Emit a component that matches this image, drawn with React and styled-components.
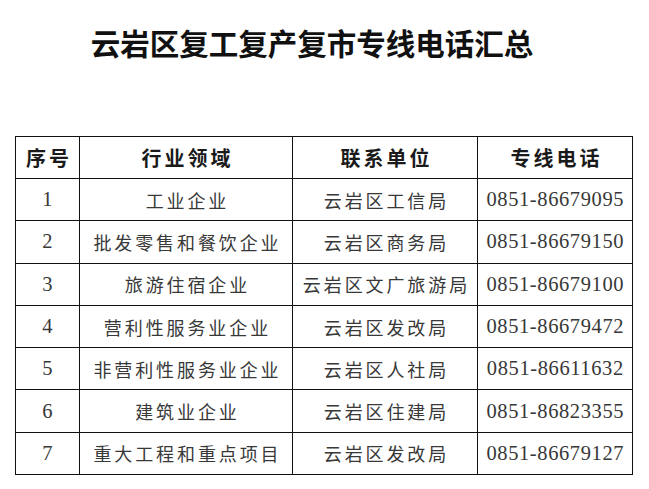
import React from "react";
import styled, { createGlobalStyle } from "styled-components";

const GlobalStyle = createGlobalStyle`
  html, body {
    margin: 0;
    padding: 0;
    background: #ffffff;
  }
`;

const Page = styled.main`
  width: 649px;
  height: 489px;
  background: #ffffff;
  font-family: "Noto Sans CJK SC", "Noto Sans", sans-serif;
  overflow: hidden;
`;

const Title = styled.h1`
  margin: 0;
  padding: 24px 25px 0 0;
  height: 112px;
  box-sizing: border-box;
  text-align: center;
  font-size: 29.5px;
  line-height: 36px;
  font-weight: 700;
  color: #111111;
  font-family: "Noto Sans CJK SC", sans-serif;
`;

const Table = styled.table`
  margin: 24px 0 0 15px;
  width: 617px;
  border-collapse: collapse;
  table-layout: fixed;
`;

const HeadRow = styled.tr`
  height: 42px;
`;

const BodyRow = styled.tr`
  height: 42.3px;
`;

const Th = styled.th`
  border: 1px solid #111111;
  padding: 0;
  font-size: 20px;
  font-weight: 700;
  color: #1a1a1a;
  text-align: center;
  vertical-align: middle;
  letter-spacing: 3px;
  text-indent: 3px;
  font-family: "Noto Sans CJK SC", sans-serif;
`;

const Td = styled.td`
  border: 1px solid #111111;
  padding: 0;
  text-align: center;
  vertical-align: middle;
  color: #383838;
  white-space: nowrap;
  font-family: ${(p) =>
    p.$num ? '"Liberation Serif", serif' : '"Noto Sans CJK SC", sans-serif'};
  font-size: ${(p) => (p.$num ? "20.5px" : "18px")};
  letter-spacing: ${(p) => (p.$num ? "0.6px" : "2.9px")};
  text-indent: ${(p) => (p.$num ? "0.6px" : "2.9px")};
`;

const rows = [
  ["1", "工业企业", "云岩区工信局", "0851-86679095"],
  ["2", "批发零售和餐饮企业", "云岩区商务局", "0851-86679150"],
  ["3", "旅游住宿企业", "云岩区文广旅游局", "0851-86679100"],
  ["4", "营利性服务业企业", "云岩区发改局", "0851-86679472"],
  ["5", "非营利性服务业企业", "云岩区人社局", "0851-86611632"],
  ["6", "建筑业企业", "云岩区住建局", "0851-86823355"],
  ["7", "重大工程和重点项目", "云岩区发改局", "0851-86679127"],
];

const App = () => {
  return (
    <Page>
      <GlobalStyle />
      <Title>云岩区复工复产复市专线电话汇总</Title>
      <Table>
        <colgroup>
          <col style={{ width: 64 }} />
          <col style={{ width: 213 }} />
          <col style={{ width: 185 }} />
          <col style={{ width: 155 }} />
        </colgroup>
        <thead>
          <HeadRow>
            <Th>序号</Th>
            <Th>行业领域</Th>
            <Th>联系单位</Th>
            <Th>专线电话</Th>
          </HeadRow>
        </thead>
        <tbody>
          {rows.map(([no, field, unit, phone]) => (
            <BodyRow key={no}>
              <Td $num>{no}</Td>
              <Td>{field}</Td>
              <Td>{unit}</Td>
              <Td $num>{phone}</Td>
            </BodyRow>
          ))}
        </tbody>
      </Table>
    </Page>
  );
};

export default App;
